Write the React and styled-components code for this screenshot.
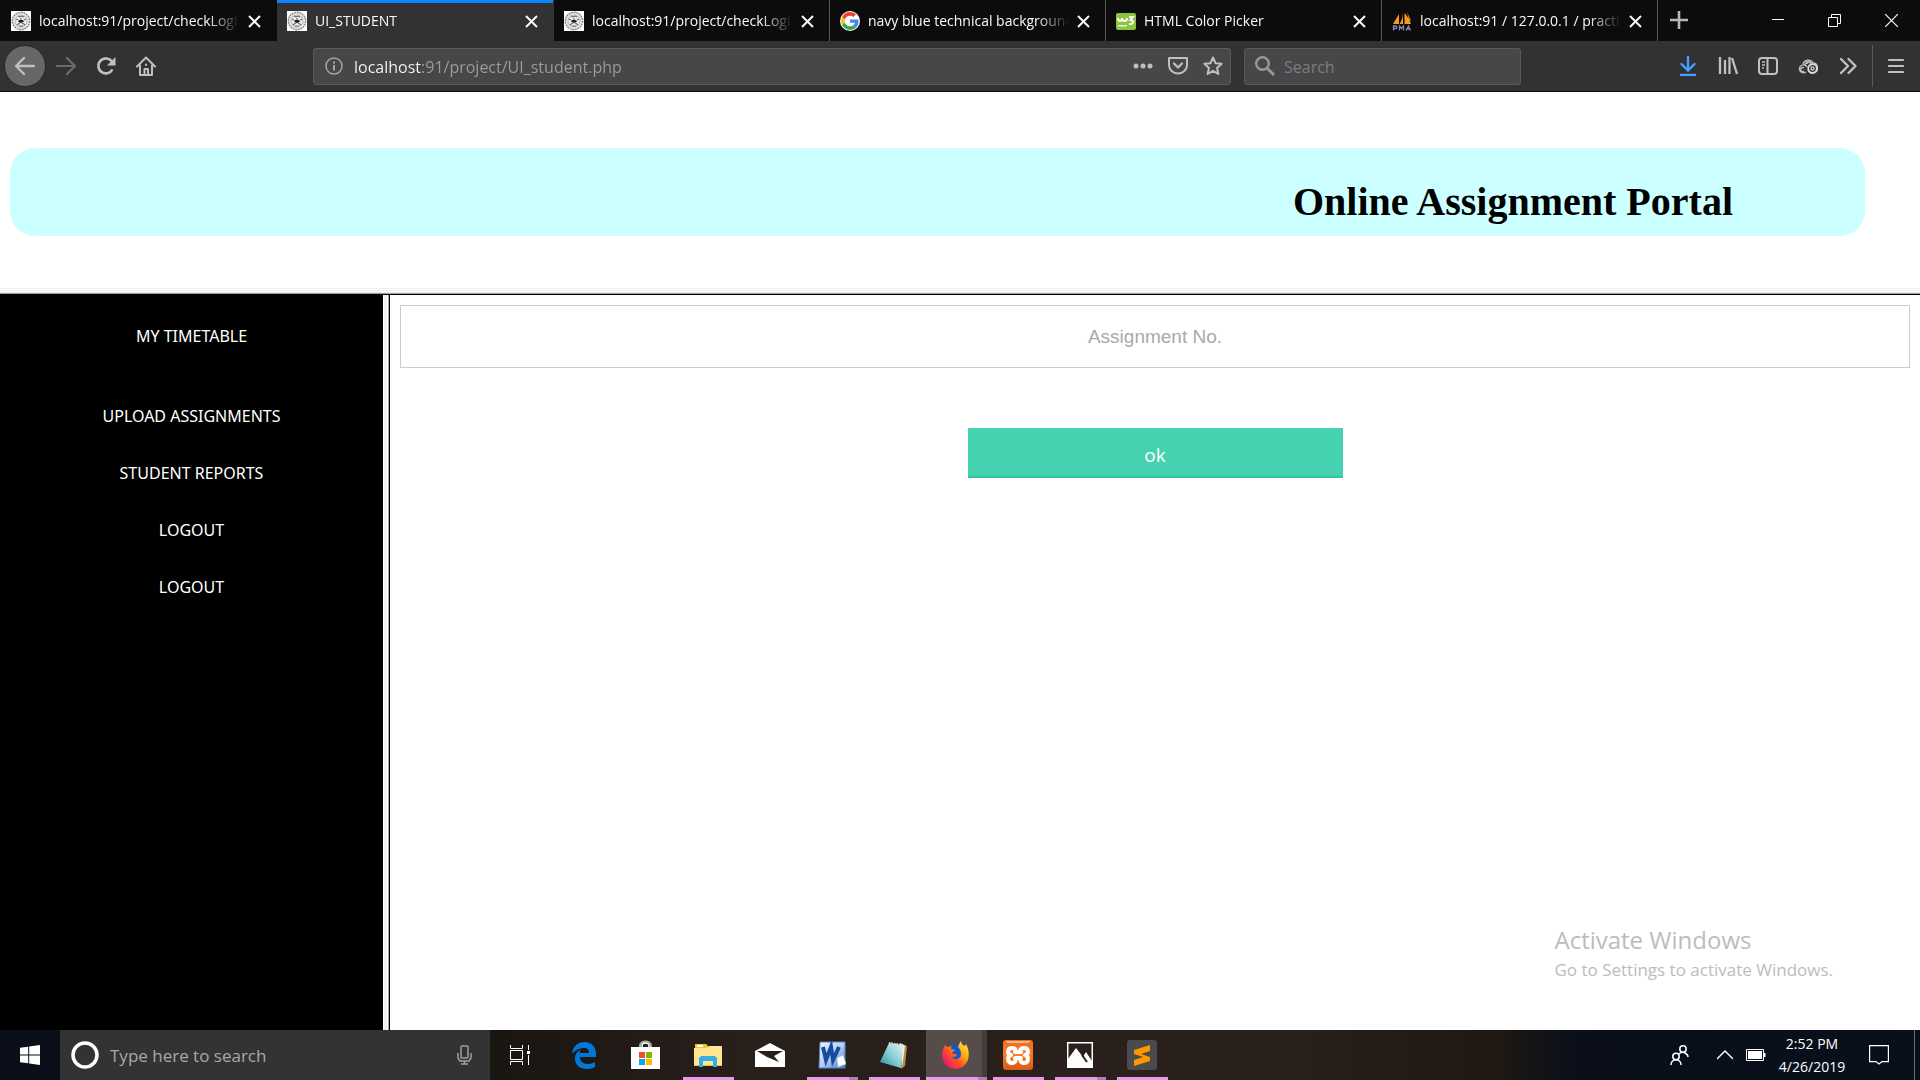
import React from "react";
import styled, { createGlobalStyle, css } from "styled-components";

const ui = `"Open Sans", "Noto Sans", sans-serif`;

const GlobalStyle = createGlobalStyle`
  *, *::before, *::after { box-sizing: border-box; }
  body { margin: 0; background: #fff; font-family: ${ui}; }
  button, input { font-family: inherit; }
  button { padding: 0; border: 0; background: none; color: inherit; cursor: pointer; }
  svg { display: block; flex: none; }
`;

const Desktop = styled.div`
  display: flex;
  flex-direction: column;
  min-height: 100vh;
`;

/* Browser chrome */
const TabStrip = styled.div`
  display: flex;
  align-items: stretch;
  height: 41px;
  padding-left: 1px;
  background: #0c0c0d;
  color: #f9f9fa;
`;

const Tab = styled.div`
  display: flex;
  align-items: center;
  gap: 8px;
  flex: 0 1 276px;
  min-width: 0;
  padding: 1px 15px 0 10px;
  border-right: 1px solid ${(p) => (p.$divider ? "#58585a" : "transparent")};
  ${(p) =>
    p.$active &&
    css`
      flex-basis: 277px;
      background: #323234;
      border-right-color: #323234;
      box-shadow: inset 0 3px #0a84ff;
    `}
`;

const TabTitle = styled.button`
  flex: 1;
  min-width: 0;
  overflow: hidden;
  white-space: nowrap;
  text-align: left;
  font-size: 14px;
  line-height: 24px;
  mask-image: linear-gradient(90deg, #000 calc(100% - 32px), transparent);
`;

const IconButton = styled.button`
  display: flex;
  align-items: center;
  justify-content: center;
  flex: none;
  width: ${(p) => p.$w || 40}px;
  height: ${(p) => p.$h || 40}px;
  color: ${(p) => p.$color || "inherit"};
`;

const BackButton = styled(IconButton)`
  border-radius: 50%;
  background: #67676a;
  box-shadow: 0 0 0 1px #29292b;
`;

const WindowControls = styled.div`
  display: flex;
  align-items: stretch;
  margin-left: auto;
`;

const Toolbar = styled.div`
  display: flex;
  align-items: center;
  height: 51px;
  padding: 0 4px 0 5px;
  background: #323234;
  border-bottom: 1px solid #0c0c0d;
  color: #c0c0c1;
`;

const Field = styled.div`
  display: flex;
  align-items: center;
  min-width: 0;
  height: 37px;
  border: 1px solid #5a5a5c;
  border-radius: 3px;
  background: #474749;
`;

const AddressField = styled(Field)`
  flex: 905 1 0;
  margin-left: 147px;
  padding-left: 11px;
`;

const SearchField = styled(Field)`
  flex: 265 1 0;
  margin-left: 13px;
  padding-left: 10px;
`;

const FieldInput = styled.input`
  flex: 1;
  min-width: 0;
  width: 100%;
  padding: 2px 0 0;
  margin-left: 9px;
  border: 0;
  outline: 0;
  background: transparent;
  font-size: 16px;
  line-height: 24px;
  color: #f9f9fa;
  &::placeholder { color: #7c7c7e; opacity: 1; }
`;

/* The host is drawn brighter than the rest of the address. */
const AddressInput = styled(FieldInput)`
  margin-left: 11px;
  color: transparent;
  caret-color: #fff;
  background: linear-gradient(90deg, #f9f9fa 68px, #9c9c9e 68px);
  background-clip: text;
  -webkit-background-clip: text;
`;

const ToolbarActions = styled.div`
  display: flex;
  align-items: center;
  margin-left: 147px;
`;

const Separator = styled.div`
  width: 1px;
  height: 42px;
  margin: 0 3px 0 4px;
  background: #5a5a5c;
`;

/* Page */
const Header = styled.header`
  padding: 56px 55px 52px 10px;
`;

const Banner = styled.div`
  padding: 31px 132px 11px;
  border-radius: 25px;
  background: #ccffff;
`;

const Title = styled.h1`
  margin: 0;
  font: bold 40px/46px "Liberation Serif", serif;
  color: #000;
  text-align: right;
`;

const FrameRule = styled.div`
  height: 7px;
  background: linear-gradient(
    #efefef 1px, #fff 1px 2px, #ececec 2px 3px, #fff 3px 4px,
    #e6e6e6 4px 5px, #a0a0a0 5px 6px, #000 6px
  );
`;

const Frames = styled.div`
  display: flex;
  flex: 1;
`;

const Sidebar = styled.nav`
  flex: 0 0 383px;
  display: flex;
  flex-direction: column;
  align-items: center;
  gap: 33px;
  padding-top: 29px;
  background: #000;
`;

const NavLink = styled.a`
  font-family: "Noto Sans", sans-serif;
  font-size: 16px;
  line-height: 24px;
  color: #fff;
  text-decoration: none;
  text-transform: uppercase;
  margin-bottom: ${(p) => (p.$spaced ? 23 : 0)}px;
`;

const FrameEdge = styled.div`
  flex: 0 0 7px;
  background: linear-gradient(
    90deg, #fff 1px, #f0f0f0 1px 2px, #f3eeee 2px 4px, #fff 4px 5px,
    #a0a0a0 5px 6px, #000 6px
  );
`;

const Main = styled.main`
  position: relative;
  flex: 1;
  min-width: 0;
  padding: 10px;
`;

const Form = styled.form`
  display: flex;
  flex-direction: column;
  align-items: center;
  gap: 60px;
`;

const AssignmentInput = styled.input`
  width: 100%;
  height: 63px;
  padding: 0;
  border: 1px solid #ccc;
  outline: 0;
  background: #fff;
  font: 19px "Liberation Sans", sans-serif;
  text-align: center;
  &::placeholder { color: #a9a9a9; opacity: 1; }
`;

const OkButton = styled.button`
  width: 375px;
  height: 50px;
  padding-top: 6px;
  border-bottom: 2px solid #33c49d;
  background: #46d1b0;
  color: #fff;
  font-size: 19px;
`;

const Watermark = styled.aside`
  position: absolute;
  right: 87px;
  bottom: 48px;
  color: #bcbcbc;
`;

const WatermarkTitle = styled.div`
  font-size: 24px;
  line-height: 36px;
`;

const WatermarkText = styled.div`
  font-size: 17px;
  line-height: 24px;
`;

/* Taskbar */
const Taskbar = styled.footer`
  display: flex;
  height: 50px;
  background: linear-gradient(
    90deg, #0a0f19 0, #0a0f19 60px, #191511 490px, #281f1b 38%, #2a201c 66%,
    #1f1813 78%, #0a0f19 82%, #08101c 100%
  );
  color: #fff;
`;

const TaskSearch = styled.div`
  display: flex;
  align-items: center;
  flex: 0 0 430px;
  padding: 0 18px 0 11px;
  background: #333;
`;

const TaskSearchInput = styled(FieldInput)`
  margin-left: 11px;
  font-size: 17px;
  &::placeholder { color: #a8a8a8; }
`;

const Apps = styled.div`
  display: flex;
  gap: 11px;
  margin-left: 10px;
`;

const AppButton = styled.button`
  display: flex;
  align-items: center;
  justify-content: center;
  width: 51px;
  border-bottom: 3px solid transparent;
  padding: 3px 2px 0 0;
  ${(p) =>
    p.$open &&
    css`
      border-image: linear-gradient(90deg, #e59aea calc(100% - ${p.$stack ? 11 : 0}px), #b27bbb 0) 3;
      border-image-width: 0 0 3px 0;
    `}
  ${(p) =>
    p.$active &&
    css`
      width: 61px;
      margin: 0 -5px;
      background: linear-gradient(90deg, #564d4a 56px, #443d3b 56px);
    `}
`;

const Tray = styled.div`
  display: flex;
  align-items: center;
  margin-left: auto;
`;

const Clock = styled.time`
  width: 92px;
  font-size: 14px;
  line-height: 23px;
  text-align: center;
`;

const ShowDesktop = styled.button`
  width: 6px;
  height: 50px;
  margin-left: 14px;
  border-left: 1px solid #6b7077;
`;

const Svg = ({ w = 20, h = w, box, children, ...rest }) => (
  <svg width={w} height={h} viewBox={box || `0 0 ${w} ${h}`} fill="none" stroke="currentColor" strokeWidth="2" aria-hidden="true" {...rest}>
    {children}
  </svg>
);

const Emblem = () => (
  <Svg stroke="none">
    <path fill="#fff" d="M0 0h20v20H0z" />
    <circle cx="10" cy="10" r="8.7" fill="#e4e4e4" stroke="#8a8a8a" strokeWidth="1.4" strokeDasharray="2 .7" />
    <circle cx="10" cy="10" r="6" fill="#eee" stroke="#aaa" strokeWidth=".8" />
    <path stroke="#666" strokeWidth="1.1" d="M7 5l2 1 2-1 2 1M5 8l2 1M13 9l2-1M10 7v2M6 14l4-3 4 3M8 15h4" />
    <path fill="#222" d="M8 9h4l1 2h-2l-1 1-1-1H7z" />
  </Svg>
);

const Google = () => (
  <Svg stroke="none" box="-3 -3 54 54">
    <circle cx="24" cy="24" r="27" fill="#fff" />
    <path fill="#EA4335" d="M24 9.5c3.54 0 6.71 1.22 9.21 3.6l6.85-6.85C35.9 2.38 30.47 0 24 0 14.62 0 6.51 5.38 2.56 13.22l7.98 6.19C12.43 13.72 17.74 9.5 24 9.5z" />
    <path fill="#4285F4" d="M46.98 24.55c0-1.57-.15-3.09-.38-4.55H24v9.02h12.94c-.58 2.96-2.26 5.48-4.78 7.18l7.73 6c4.51-4.18 7.09-10.36 7.09-17.65z" />
    <path fill="#FBBC05" d="M10.53 28.59c-.48-1.45-.76-2.99-.76-4.59s.27-3.14.76-4.59l-7.98-6.19C.92 16.46 0 20.12 0 24s.92 7.54 2.56 10.78z" />
    <path fill="#34A853" d="M24 48c6.48 0 11.93-2.13 15.89-5.81l-7.73-6c-2.15 1.45-4.92 2.3-8.16 2.3-6.26 0-11.57-4.22-13.47-9.91l-7.98 6.19C6.51 42.62 14.62 48 24 48z" />
  </Svg>
);

const W3 = () => (
  <Svg stroke="none">
    <rect y="2" width="20" height="17" rx="2" fill="#8bc53f" />
    <path stroke="#fff" strokeWidth="1.8" d="M2 7c0 4 4 4 4 0 0 4 5 4 5 0M13 6h4l-2.5 3c4 0 3.500 5-1.500 4" />
    <path fill="#fff" opacity=".8" d="M2 14h9v1.500H2z" />
  </Svg>
);

const Pma = () => (
  <Svg stroke="none">
    <path fill="#f79a1e" d="M7 3v10H1zM11 0v13H7.500c3-4 3.500-9 3.500-13zM12.500 2c3 3 5 7 6.500 11h-6.500zM15 1l4 9-2-1z" />
    <path stroke="#8588ad" strokeWidth="1.3" d="M1.500 19.500V15H4q2 1.300 0 2.500H2M7.500 19.500V15l2 2.500 2-2.500v4.500M14 19.500L16.500 15l2 4.500M15 18h3" />
  </Svg>
);

const Cross = () => (
  <Svg w={13}><path d="M1 1l11 11M12 1L1 12" /></Svg>
);

const tabs = [
  { icon: <Emblem />, title: "localhost:91/project/checkLogi" },
  { icon: <Emblem />, title: "UI_STUDENT", active: true },
  { icon: <Emblem />, title: "localhost:91/project/checkLogi", divider: true },
  { icon: <Google />, title: "navy blue technical background", divider: true },
  { icon: <W3 />, title: "HTML Color Picker", divider: true },
  { icon: <Pma />, title: "localhost:91 / 127.0.0.1 / practi", divider: true },
];

const Browser = () => (
  <>
    <TabStrip>
      {tabs.map((t, i) => (
        <Tab key={i} $active={t.active} $divider={t.divider}>
          {t.icon}
          <TabTitle>{t.title}</TabTitle>
          <IconButton $w={13} $h={20} aria-label="Close tab"><Cross /></IconButton>
        </Tab>
      ))}
      <IconButton $w={42} aria-label="New tab" $color="#b8b8b9">
        <Svg w={18} strokeWidth="2.600"><path d="M9 0v18M0 9h18" /></Svg>
      </IconButton>
      <WindowControls>
        <IconButton $w={57} aria-label="Minimize">
          <Svg w={12} strokeWidth="1"><path d="M0 5.500h12" /></Svg>
        </IconButton>
        <IconButton $w={57} aria-label="Restore">
          <Svg w={13} strokeWidth="1"><path d="M.5 3.500h9v9h-9zM3.500 3.500v-3h9v9h-3" /></Svg>
        </IconButton>
        <IconButton $w={57} aria-label="Close">
          <Svg w={13} strokeWidth="1.200"><path d="M0 0l13 13M13 0L0 13" /></Svg>
        </IconButton>
      </WindowControls>
    </TabStrip>

    <Toolbar>
      <BackButton aria-label="Back">
        <Svg strokeWidth="2.400" strokeLinecap="round" strokeLinejoin="round"><path d="M19 10H2M9 2l-8 8 8 8" /></Svg>
      </BackButton>
      <IconButton $w={41} aria-label="Forward" $color="#6c6c6e">
        <Svg strokeWidth="2.200" strokeLinecap="round" strokeLinejoin="round"><path d="M1 10h17M11 2l8 8-8 8" /></Svg>
      </IconButton>
      <IconButton aria-label="Reload">
        <Svg strokeWidth="2.600"><path d="M16.500 13.500A7.500 7.500 0 1 1 16 5.500" /><path fill="currentColor" stroke="none" d="M19.500 1v8.500H11z" /></Svg>
      </IconButton>
      <IconButton aria-label="Home">
        <Svg strokeLinecap="round" strokeLinejoin="round"><path d="M1 10.500L10 1.500l9 9M4 9.500V19h12V9.500M8.500 19v-6h3.500v6" /><path d="M10 8.500v.5" /></Svg>
      </IconButton>
      <AddressField>
        <Svg w={18} strokeWidth="1.500" color="#a5a5a7"><circle cx="9" cy="9" r="8" /><path strokeWidth="2" d="M9 8v5.500M9 4.500v2" /></Svg>
        <AddressInput aria-label="Address" defaultValue="localhost:91/project/UI_student.php" />
        <IconButton $w={35} $h={35} aria-label="Page actions">
          <Svg stroke="none" fill="currentColor"><circle cx="3" cy="10" r="2.500" /><circle cx="10" cy="10" r="2.500" /><circle cx="17" cy="10" r="2.500" /></Svg>
        </IconButton>
        <IconButton $w={35} $h={35} aria-label="Save to Pocket">
          <Svg strokeLinejoin="round" strokeLinecap="round"><path d="M1 2h18v7a9 8.500 0 0 1-18 0z" /><path strokeWidth="2.400" d="M6 7.500l4 4 4-4" /></Svg>
        </IconButton>
        <IconButton $w={35} $h={35} aria-label="Bookmark">
          <Svg strokeLinejoin="round"><path d="M10 1.500l2.500 5.700 6.200.6-4.700 4.100 1.400 6.100-5.400-3.200L4.600 18 6 11.900 1.300 7.800l6.200-.6z" /></Svg>
        </IconButton>
      </AddressField>
      <SearchField>
        <Svg strokeWidth="2.400" color="#98989a"><circle cx="7.500" cy="7.500" r="6.300" /><path strokeWidth="3" d="M12 12l7 7" /></Svg>
        <FieldInput aria-label="Search the web" placeholder="Search" />
      </SearchField>
      <ToolbarActions>
        <IconButton aria-label="Downloads" $color="#45a1ff">
          <Svg strokeWidth="2.400" strokeLinecap="round"><path d="M10 1v13M3.500 8l6.500 6.500L16.500 8M3 19h14" /></Svg>
        </IconButton>
        <IconButton aria-label="Library">
          <Svg strokeWidth="2.300"><path d="M2 1v17M7 4v14M11.500 1v17M14 2l5 16" /></Svg>
        </IconButton>
        <IconButton aria-label="Sidebars">
          <Svg><rect x="1" y="2" width="18" height="16" rx="3" /><path d="M9.500 2v16" /><path strokeWidth="1.300" d="M4 6h3M4 9h3M4 12h2" /></Svg>
        </IconButton>
        <IconButton aria-label="Extension">
          <Svg strokeWidth="1.400">
            <path d="M8 16a4 4 0 1 1 1-5M6 15a2 2 0 1 1 0-3M5 8a5.500 5.500 0 0 1 10-1 5 5 0 1 1-5 7M7 9c1-4 6-4 6-1M9 8a2 2 0 1 1 3 2" />
            <circle cx="14.500" cy="12.500" r="4.300" strokeWidth="1.800" stroke="#ddd" /><circle cx="14.500" cy="12.500" r="1.500" />
          </Svg>
        </IconButton>
        <IconButton aria-label="More tools">
          <Svg strokeWidth="2.400" strokeLinecap="round" strokeLinejoin="round"><path d="M3 3l7 7-7 7M10.500 3l7 7-7 7" /></Svg>
        </IconButton>
        <Separator />
        <IconButton aria-label="Menu">
          <Svg w={16} strokeLinecap="round" strokeWidth="2.200"><path d="M1 2h14M1 8h14M1 14h14" /></Svg>
        </IconButton>
      </ToolbarActions>
    </Toolbar>
  </>
);

const Windows = () => (
  <Svg stroke="none" fill="#fff"><path d="M0 2.800L8.200 1.700V9.500H0zM9.200 1.500L20 0v9.500H9.200zM0 10.500h8.200v7.800L0 17.200zM9.200 10.500H20V20L9.200 18.500z" /></Svg>
);

const Edge = () => (
  <Svg w={26} h={28} stroke="none"><path fill="#0078d7" d="M1 13C2 5 7 1 13.500 1 21 1 25 6.500 25 13v3H9c0 5 4 7 8 7 3 0 5-1 7-2v5c-2 1.300-5 2-8 2C9 28 4 24 4 17.500c0-4 2.500-7.500 6-9-1 1.500-1.500 2.500-1.500 3.500H18c0-3-1.500-5-5-5C8 7 4 9 1 13z" /></Svg>
);

const Store = () => (
  <Svg w={29} h={30} stroke="none">
    <path stroke="#aaa" strokeWidth="2" d="M9 8V6c0-6 11-6 11 0v2" /><path stroke="#fff" strokeWidth="1.500" d="M11 8V6c0-4 7-4 7 0v2" />
    <path fill="#fff" d="M0 7h29v22H0z" /><path fill="#f25022" d="M8 12h6v6H8z" /><path fill="#7fba00" d="M15 12h6v6h-6z" />
    <path fill="#00a4ef" d="M8 19h6v6H8z" /><path fill="#ffb900" d="M15 19h6v6h-6z" />
  </Svg>
);

const Explorer = () => (
  <Svg w={28} h={24} stroke="none">
    <path fill="#f5bf26" d="M1 1h11l2 2v3H1z" /><path fill="#fff" d="M3 2h6v2H3z" /><path fill="#ffe590" d="M0 5h12l3-2h13v20H0z" />
    <path fill="#e8c252" d="M0 22h28v1H0z" /><path fill="#35aee6" d="M5 15l2-2h14l2 2v9h-4v-6H9v6H5z" />
  </Svg>
);

const Mail = () => (
  <Svg w={30} h={24} stroke="none"><path fill="#fff" d="M0 8l15-8 15 8v16H0z" /><path fill="#281f1b" d="M2 8h26l-9 5 5 6-12-5z" /></Svg>
);

const Word = () => (
  <Svg w={28} h={28} stroke="none">
    <defs><linearGradient id="word" x1="0" y1="0" x2="1" y2="1"><stop stopColor="#f3f8ff" /><stop offset=".5" stopColor="#b5d0f2" /><stop offset="1" stopColor="#3c76c8" /></linearGradient></defs>
    <path fill="url(#word)" stroke="#5485c9" d="M2 1h25v26H1z" strokeWidth="1" />
    <path stroke="#164b9e" strokeWidth="4" d="M5 6l3 13 5-13 2 13 6-13" /><path fill="#fff" stroke="#a8c3e6" strokeWidth=".7" d="M19 17l6-3 3 9-8 3z" />
  </Svg>
);

const Notepad = () => (
  <Svg w={28} h={28} stroke="none">
    <defs><linearGradient id="pad" x1="0" y1="1" x2="1" y2="0"><stop stopColor="#238a9b" /><stop offset=".5" stopColor="#8bcdd6" /><stop offset="1" stopColor="#e2f4f5" /></linearGradient></defs>
    <path fill="#b38d47" d="M23 3l4 2-2 20-4 3z" /><path fill="#eee" d="M20 2l5 3-3 22z" />
    <path fill="url(#pad)" d="M9 2l14 2-2 23L0 21z" /><path stroke="#ddd" strokeWidth="2" strokeDasharray="1.500 1" d="M9 2l14 2" />
  </Svg>
);

const Firefox = () => (
  <Svg w={28} h={28} stroke="none">
    <defs>
      <linearGradient id="fox" x1="1" y1="0" x2=".1" y2=".9"><stop stopColor="#fff44f" /><stop offset=".35" stopColor="#ffb017" /><stop offset=".65" stopColor="#ff4e26" /><stop offset="1" stopColor="#e4107b" /></linearGradient>
    </defs>
    <circle cx="14" cy="13" r="10" fill="#1557c7" />
    <path fill="url(#fox)" d="M3 4c1 1 2 2 3 2l4-1c-1 1-1 2-1 3l4 1c0 1-3 2-3 3 1 1 4 1 5 2-1 2-3 2-5 2 3 4 9 2 9-3 0-4-2-6-3-7 1-3 2-5 3-6 0 3 2 4 4 5l1-2c5 9 4 23-10 25C3 28-4 17 3 4z" />
  </Svg>
);

const Xampp = () => (
  <Svg w={30} stroke="none">
    <defs><linearGradient id="xampp" x1="0" y1="0" x2="0" y2="1"><stop stopColor="#ee6a1d" /><stop offset=".5" stopColor="#fb7a24" /><stop offset="1" stopColor="#d45c16" /></linearGradient></defs>
    <rect width="30" height="30" rx="3" fill="url(#xampp)" /><path fill="#ffb37f" d="M2 1h26l-3 2H5z" />
    <path stroke="#fff" strokeWidth="4" strokeLinejoin="round" d="M9 8c-5 0-5 6-1 7-4 1-4 8 1 8 4 0 4-4 3-5h6c-1 1-1 5 3 5 5 0 5-7 1-8 4-1 4-7-1-7-4 0-4 3-3 4h-6c1-1 1-4-3-4z" />
  </Svg>
);

const Photos = () => (
  <Svg w={26} stroke="none"><path stroke="#fff" strokeWidth="1.500" d="M.75.75h24.500v24.500H.75z" /><path fill="#fff" d="M1 17L9 6l7 9 3-5 6 9v6H1z" /><path stroke="#281f1b" d="M15 13l5 7" /></Svg>
);

const Sublime = () => (
  <Svg w={30} stroke="none"><rect width="30" height="30" rx="3" fill="#4b4b4b" /><path fill="#ff9800" d="M7 10l16-5v6l-9 3 9 3v4L7 26v-6l9-3-9-3z" /></Svg>
);

const apps = [
  { name: "Microsoft Edge", icon: <Edge /> },
  { name: "Microsoft Store", icon: <Store /> },
  { name: "File Explorer", icon: <Explorer />, open: true },
  { name: "Mail", icon: <Mail /> },
  { name: "Word", icon: <Word />, open: true, stack: true },
  { name: "Notepad", icon: <Notepad />, open: true },
  { name: "Firefox", icon: <Firefox />, open: true, stack: true, active: true },
  { name: "XAMPP", icon: <Xampp />, open: true },
  { name: "Photos", icon: <Photos />, open: true, stack: true },
  { name: "Sublime Text", icon: <Sublime />, open: true },
];

const links = ["My Timetable", "Upload Assignments", "Student Reports", "Logout", "Logout"];

export default function App() {
  return (
    <Desktop>
      <GlobalStyle />
      <Browser />
      <Header>
        <Banner><Title>Online Assignment Portal</Title></Banner>
      </Header>
      <FrameRule />
      <Frames>
        <Sidebar>
          {links.map((l, i) => <NavLink key={i} href="#" $spaced={i === 0}>{l}</NavLink>)}
        </Sidebar>
        <FrameEdge />
        <Main>
          <Form onSubmit={(e) => e.preventDefault()}>
            <AssignmentInput aria-label="Assignment No." placeholder="Assignment No." />
            <OkButton type="submit">ok</OkButton>
          </Form>
          <Watermark>
            <WatermarkTitle>Activate Windows</WatermarkTitle>
            <WatermarkText>Go to Settings to activate Windows.</WatermarkText>
          </Watermark>
        </Main>
      </Frames>
      <Taskbar>
        <IconButton $w={60} $h={50} aria-label="Start"><Windows /></IconButton>
        <TaskSearch>
          <Svg w={28} strokeWidth="3.500"><circle cx="14" cy="14" r="12" /></Svg>
          <TaskSearchInput aria-label="Search Windows" placeholder="Type here to search" />
          <Svg w={15} h={20} color="#a0a0a0" strokeWidth="1.500"><rect x="4" y="1" width="7" height="12" rx="1" /><path d="M1 8v5l2 3h9l2-3V8M7.500 16v3M4 19h7" /></Svg>
        </TaskSearch>
        <IconButton $w={59} $h={50} aria-label="Task View">
          <Svg strokeWidth="1"><path d="M.5 0v3.500h12V0M.5 5.500h12v9H.5zM.5 20v-3.500h12V20M18.500 0v5M18.500 10v10" /><path fill="#fff" stroke="none" d="M17 6h3v3h-3z" /></Svg>
        </IconButton>
        <Apps>
          {apps.map((a) => (
            <AppButton key={a.name} aria-label={a.name} $open={a.open} $stack={a.stack} $active={a.active}>{a.icon}</AppButton>
          ))}
        </Apps>
        <Tray>
          <IconButton $w={48} aria-label="People">
            <Svg strokeWidth="1.500"><circle cx="13" cy="4" r="3.200" /><path d="M9 9c2-2 4-2 6-1 2 1 3 2 3 4" /><circle cx="6" cy="11.500" r="3.200" /><path d="M1 20c0-7 10-7 10 0" /></Svg>
          </IconButton>
          <IconButton $w={42} aria-label="Hidden icons"><Svg w={16} strokeWidth="1.400"><path d="M0 12l8-8 8 8" /></Svg></IconButton>
          <IconButton $w={20} aria-label="Battery">
            <Svg w={20} h={12} strokeWidth="1"><path d="M.5.5h17v11H.5z" /><path fill="#fff" stroke="none" d="M2 2h14v8H2zM18 4h1.500v4H18z" /></Svg>
          </IconButton>
          <Clock>2:52 PM<br />4/26/2019</Clock>
          <IconButton $w={42} aria-label="Notifications">
            <Svg strokeWidth="1.200"><path d="M.6.6h18.800v16H13L10 19l-3-2.400H.6z" /></Svg>
          </IconButton>
          <ShowDesktop aria-label="Show desktop" />
        </Tray>
      </Taskbar>
    </Desktop>
  );
}
